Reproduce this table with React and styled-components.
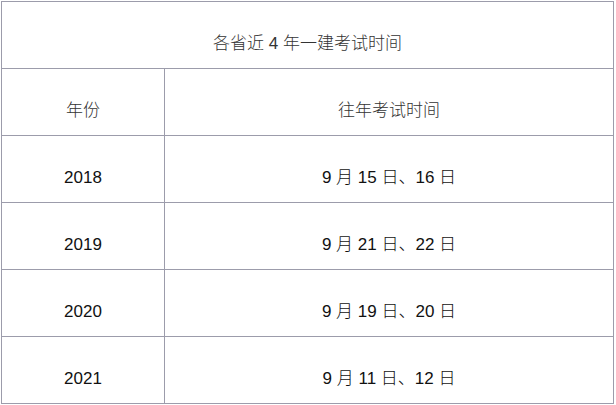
import React from 'react';
import styled, { createGlobalStyle } from 'styled-components';

const GlobalStyle = createGlobalStyle`
    html, body {
        margin: 0;
        padding: 0;
        background: #ffffff;
    }
`

// 역대 시험 일정
const examList = [
    { year: '2018', date: '9 月 15 日、16 日' },
    { year: '2019', date: '9 月 21 日、22 日' },
    { year: '2020', date: '9 月 19 日、20 日' },
    { year: '2021', date: '9 月 11 日、12 日' },
]

function App() {
    return (
        <>
            <GlobalStyle />
            <TableWrap>
                <ExamTable>
                    <colgroup>
                        <col style={{ width: '163px' }} />
                        <col />
                    </colgroup>
                    <tbody>
                        <tr>
                            <Cell colSpan={2}>各省近 4 年一建考试时间</Cell>
                        </tr>
                        <tr>
                            <Cell>年份</Cell>
                            <Cell>往年考试时间</Cell>
                        </tr>
                        {
                            examList.map((exam) => {
                                return (
                                    <tr key={exam.year}>
                                        <Cell $num>{exam.year}</Cell>
                                        <Cell $num>{exam.date}</Cell>
                                    </tr>
                                )
                            })
                        }
                    </tbody>
                </ExamTable>
            </TableWrap>
        </>
    );
}

export default App;

const TableWrap = styled.div`
    padding: 1px 0 0 1px;
`

const ExamTable = styled.table`
    width: 613px;
    border-collapse: collapse;
    table-layout: fixed;
    border: 1px solid #9c9cab;
`

const Cell = styled.td`
    height: 67px;
    box-sizing: border-box;
    padding: 18px 0 0 0;
    border: 1px solid #9c9cab;
    text-align: center;
    vertical-align: middle;
    font-family: 'Liberation Sans', 'Noto Sans CJK SC', sans-serif;
    font-size: 17px;
    font-weight: 300;
    line-height: 20px;
    color: ${props => props.$num ? '#111111' : '#333333'};
    white-space: nowrap;
`
